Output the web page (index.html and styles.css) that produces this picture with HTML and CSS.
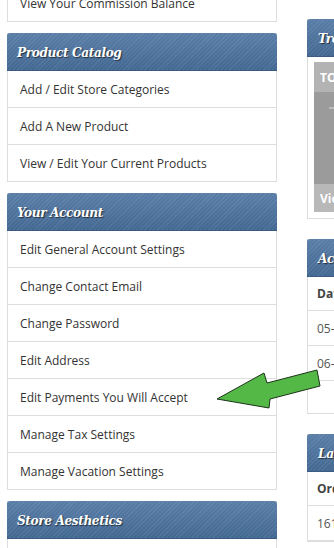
FILE: index.html
```html
<!DOCTYPE html>
<html>
<head>
<meta charset="utf-8">
<link rel="stylesheet" href="styles.css">
</head>
<body>
<div class="page">
  <div class="col-left">
    <div class="panel">
      <ul class="menu">
        <li>View Your Commission Balance</li>
      </ul>
    </div>
    <div class="panel">
      <div class="panel-head">Product Catalog</div>
      <ul class="menu">
        <li>Add / Edit Store Categories</li>
        <li>Add A New Product</li>
        <li>View / Edit Your Current Products</li>
      </ul>
    </div>
    <div class="panel">
      <div class="panel-head">Your Account</div>
      <ul class="menu">
        <li>Edit General Account Settings</li>
        <li>Change Contact Email</li>
        <li>Change Password</li>
        <li>Edit Address</li>
        <li>Edit Payments You Will Accept</li>
        <li>Manage Tax Settings</li>
        <li>Manage Vacation Settings</li>
      </ul>
    </div>
    <div class="panel">
      <div class="panel-head">Store Aesthetics</div>
      <ul class="menu">
        <li>Edit Store Theme</li>
      </ul>
    </div>
  </div>
  <div class="col-right">
    <div class="rpanel">
      <div class="panel-head">Trending Products</div>
      <div class="rbody">
        <div class="thumb">
          <div class="thumb-top">TOP SELLER</div>
          <div class="thumb-mid"><span class="dash"></span></div>
          <div class="thumb-bot">View Item</div>
        </div>
      </div>
    </div>
    <div class="rpanel">
      <div class="panel-head">Account Activity</div>
      <div class="table">
        <div class="row head">Date</div>
        <div class="row">05-02-2016</div>
        <div class="row">06-11-2016</div>
        <div class="spacer"></div>
      </div>
    </div>
    <div class="rpanel">
      <div class="panel-head">Latest Orders</div>
      <div class="table">
        <div class="row head">Order</div>
        <div class="row">1612</div>
      </div>
    </div>
  </div>
</div>
<svg class="arrow" width="334" height="548" viewBox="0 0 334 548">
  <polygon points="217,399 264,373 267,383 317,370 320,386 270,399 269,408" fill="#53b846" stroke="#1d331a" stroke-width="1" stroke-linejoin="round"/>
</svg>
</body>
</html>
```

FILE: styles.css
```css
html, body {
  margin: 0;
  padding: 0;
  overflow: hidden;
  background: #fff;
  height: 548px;
}
.page {
  display: flex;
  gap: 30px;
  padding-left: 7px;
  font-family: "Open Sans", "Liberation Sans", sans-serif;
  color: #333;
}
.col-left {
  width: 270px;
  flex: none;
  margin-top: -15px;
  display: flex;
  flex-direction: column;
  gap: 11px;
}
.col-right {
  width: 300px;
  flex: none;
  padding-top: 19px;
  display: flex;
  flex-direction: column;
  gap: 20px;
}
.panel {
  border-left: 1px solid #ddd;
  border-right: 1px solid #ddd;
  background: #fff;
}
.panel-head {
  height: 38px;
  box-sizing: border-box;
  padding: 0 10px;
  display: flex;
  align-items: center;
  border-radius: 3px 3px 0 0;
  margin: 0 -1px;
  background:
    repeating-linear-gradient(135deg, rgba(255,255,255,0.07) 0 1px, rgba(0,0,0,0) 1px 3px),
    linear-gradient(#5a7ea8, #436891);
  border-bottom: 1px solid #3a5b82;
  color: #fff;
  font-family: "DejaVu Serif Condensed", "DejaVu Serif", serif;
  font-stretch: condensed;
  font-weight: bold;
  font-style: italic;
  font-size: 13.5px;
  letter-spacing: -0.4px;
  text-shadow: 1px 1px 1px rgba(0,0,0,0.6);
  white-space: nowrap;
  overflow: hidden;
}
.menu {
  list-style: none;
  margin: 0;
  padding: 0;
}
.menu li {
  height: 36px;
  border-bottom: 1px solid #ddd;
  padding: 0 12px;
  display: flex;
  align-items: center;
  font-size: 12px;
  color: #333;
}
.rpanel {
  border: 1px solid #ddd;
  border-top: none;
}
.rpanel .panel-head {
  margin: 0 -1px;
  padding: 0 11px;
}
.rbody {
  padding: 5px 6px 6px;
}
.thumb {
  height: 150px;
  display: flex;
  flex-direction: column;
  font-weight: bold;
  font-size: 12px;
  color: #fff;
}
.thumb-top {
  height: 30px;
  background: #b3b3b3;
  display: flex;
  align-items: center;
  padding: 0 6px;
}
.thumb-mid {
  flex: 1;
  background: #9b9b9b;
  position: relative;
}
.dash {
  position: absolute;
  left: 15px;
  top: 15px;
  width: 8px;
  height: 2px;
  background: #bbb;
}
.thumb-bot {
  height: 28px;
  background: #b8b8b8;
  display: flex;
  align-items: center;
  padding: 0 6px;
}
.table {
  font-size: 12px;
  color: #555;
}
.row {
  height: 34px;
  border-bottom: 1px solid #ddd;
  display: flex;
  align-items: center;
  padding: 0 9px;
}
.row.head {
  height: 33px;
  font-weight: bold;
  color: #444;
}
.spacer {
  height: 32px;
}
.arrow {
  position: absolute;
  left: 0;
  top: 0;
  pointer-events: none;
}
```
